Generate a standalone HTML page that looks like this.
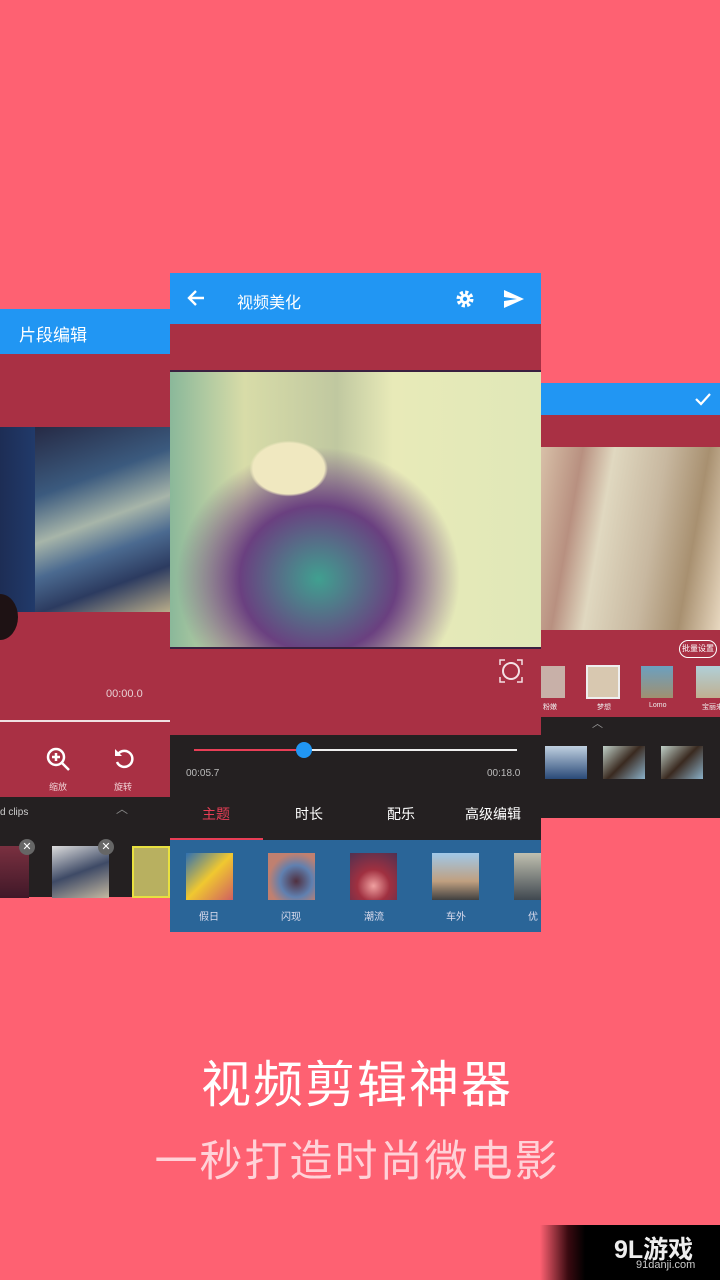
<!DOCTYPE html>
<html><head><meta charset="utf-8"><style>
*{margin:0;padding:0;box-sizing:border-box}
body{width:720px;height:1280px;background:#fe6172;position:relative;overflow:hidden;font-family:"Liberation Sans","Noto Sans CJK SC",sans-serif}
.a{position:absolute}
.blue{background:#2196f3}
.mar{background:#a93044}
.dk{background:#242021}
.w{color:#fff}
</style></head><body>
<!-- left panel -->
<div class="a blue" style="left:0;top:309px;width:170px;height:45px"></div>
<div class="a w" style="left:19px;top:321px;font-size:17px">片段编辑</div>
<div class="a mar" style="left:0;top:354px;width:170px;height:443px"></div>
<div class="a" style="left:0;top:427px;width:35px;height:185px;background:linear-gradient(90deg,#1d2d55,#213a6a)"></div>
<div class="a" style="left:35px;top:427px;width:135px;height:185px;background:linear-gradient(160deg,#262a45 0%,#3b5a7e 30%,#a7b5a9 50%,#4b6a90 65%,#2c3b60 80%,#b9ad8a 100%)"></div>
<div class="a" style="left:-18px;top:594px;width:36px;height:46px;border-radius:50%;background:#1e1214"></div>
<div class="a" style="left:106px;top:688px;font-size:11px;color:#e8d0d4">00:00.0</div>
<div class="a" style="left:0;top:720px;width:170px;height:2px;background:#f0e0e2"></div>
<svg class="a" style="left:45px;top:746px" width="28" height="28" viewBox="0 0 28 28"><circle cx="11" cy="11" r="8" fill="none" stroke="#fff" stroke-width="2.5"/><path d="M11 7v8M7 11h8M17 17l7 7" stroke="#fff" stroke-width="2.5"/></svg>
<svg class="a" style="left:112px;top:746px" width="24" height="26" viewBox="0 0 24 26"><path d="M6 8a8 8 0 1 1-1 8" fill="none" stroke="#fff" stroke-width="2.5"/><path d="M3 3v7h7z" fill="#fff"/></svg>
<div class="a" style="left:49px;top:780px;font-size:9px;color:#f0d0d4">缩放</div>
<div class="a" style="left:114px;top:780px;font-size:9px;color:#f0d0d4">旋转</div>
<div class="a dk" style="left:0;top:797px;width:170px;height:100px"></div>
<div class="a" style="left:0;top:807px;font-size:10px;color:#ccc">d clips</div>
<div class="a" style="left:116px;top:800px;font-size:12px;color:#888">︿</div>
<div class="a" style="left:0;top:846px;width:29px;height:52px;background:linear-gradient(#7a3040,#401828)"></div>
<div class="a" style="left:52px;top:846px;width:57px;height:52px;background:linear-gradient(160deg,#ddd,#3e4a66 50%,#c4b8a0)"></div>
<div class="a" style="left:132px;top:846px;width:38px;height:52px;background:#b8b060;border:2px solid #e8e040"></div>
<div class="a" style="left:19px;top:839px;width:16px;height:16px;border-radius:50%;background:#666;color:#fff;font-size:11px;text-align:center;line-height:16px">✕</div>
<div class="a" style="left:98px;top:839px;width:16px;height:16px;border-radius:50%;background:#666;color:#fff;font-size:11px;text-align:center;line-height:16px">✕</div>
<!-- right panel -->
<div class="a blue" style="left:541px;top:383px;width:179px;height:32px"></div>
<svg class="a" style="left:694px;top:391px" width="18" height="16"><path d="M2 8l5 5 9-10" fill="none" stroke="#fff" stroke-width="2.2"/></svg>
<div class="a mar" style="left:541px;top:415px;width:179px;height:302px"></div>
<div class="a" style="left:541px;top:447px;width:179px;height:183px;background:linear-gradient(100deg,#d8c0a8 0%,#b89080 20%,#e0d8c0 35%,#c8b8a0 60%,#a89070 80%,#e8d8c0)"></div>
<div class="a" style="left:679px;top:640px;width:38px;height:18px;border:1px solid #fff;border-radius:9px;color:#fff;font-size:8px;text-align:center;line-height:16px">批量设置</div>
<div class="a" style="left:541px;top:666px;width:24px;height:32px;background:#c8b0a8"></div>
<div class="a" style="left:586px;top:665px;width:34px;height:34px;background:#d8c8b0;border:2px solid #eee"></div>
<div class="a" style="left:641px;top:666px;width:32px;height:32px;background:linear-gradient(#6ba0c0,#a09070)"></div>
<div class="a" style="left:696px;top:666px;width:24px;height:32px;background:linear-gradient(#b0d0d8,#c0b090)"></div>
<div class="a" style="left:543px;top:702px;font-size:7px;color:#eee">粉嫩</div>
<div class="a" style="left:597px;top:702px;font-size:7px;color:#eee">梦想</div>
<div class="a" style="left:649px;top:702px;font-size:7px;color:#eee">Lomo</div>
<div class="a" style="left:702px;top:702px;font-size:7px;color:#eee;white-space:nowrap">宝丽来</div>
<div class="a dk" style="left:541px;top:717px;width:179px;height:101px"></div>
<div class="a" style="left:592px;top:715px;font-size:11px;color:#999">︿</div>
<div class="a" style="left:545px;top:746px;width:42px;height:33px;background:linear-gradient(#c0d0e0,#2a4a78)"></div>
<div class="a" style="left:603px;top:746px;width:42px;height:33px;background:linear-gradient(135deg,#c0d0c8,#3a2a20 50%,#8ab0c8)"></div>
<div class="a" style="left:661px;top:746px;width:42px;height:33px;background:linear-gradient(135deg,#c0d0c8,#3a2a20 50%,#8ab0c8)"></div>
<!-- center panel -->
<div class="a blue" style="left:170px;top:273px;width:371px;height:51px"></div>
<svg class="a" style="left:186px;top:288px" width="20" height="20"><path d="M18 10H3M10 3l-7 7 7 7" fill="none" stroke="#fff" stroke-width="2.4"/></svg>
<div class="a w" style="left:237px;top:289px;font-size:16px">视频美化</div>
<svg class="a" style="left:455px;top:289px" width="20" height="20" viewBox="0 0 20 20"><circle cx="10" cy="10" r="6.5" fill="none" stroke="#fff" stroke-width="4" stroke-dasharray="3 2.1"/><circle cx="10" cy="10" r="5" fill="#fff"/><circle cx="10" cy="10" r="2.2" fill="#2196f3"/></svg>
<svg class="a" style="left:503px;top:289px" width="22" height="20"><path d="M1 1l20 9-20 9 0-7 13-2-13-2z" fill="#fff"/></svg>
<div class="a mar" style="left:170px;top:324px;width:371px;height:411px"></div>
<div class="a" style="left:170px;top:370px;width:371px;height:2px;background:#3a2040"></div>
<div class="a" style="left:170px;top:372px;width:371px;height:276px;background:radial-gradient(ellipse at 32% 35%,#f0e8c0 0 10%,transparent 11%),radial-gradient(ellipse at 40% 75%,#40a090 0,#6a4080 25%,transparent 45%),linear-gradient(90deg,#8ab89a 0%,#d8dca8 20%,#c0c8a0 45%,#e8eab8 60%,#e0e8b8 100%)"></div>
<div class="a" style="left:170px;top:647px;width:371px;height:2px;background:#3a2040"></div>
<svg class="a" style="left:499px;top:659px" width="24" height="24"><circle cx="12" cy="12" r="8" fill="none" stroke="#f4e0e4" stroke-width="2"/><path d="M1 6V1h5M18 1h5v5M23 18v5h-5M6 23H1v-5" fill="none" stroke="#f4e0e4" stroke-width="1.5"/></svg>
<div class="a dk" style="left:170px;top:735px;width:371px;height:105px"></div>
<div class="a" style="left:194px;top:749px;width:110px;height:2px;background:#e83e56"></div>
<div class="a" style="left:304px;top:749px;width:213px;height:2px;background:#eee"></div>
<div class="a" style="left:296px;top:742px;width:16px;height:16px;border-radius:50%;background:#2196f3"></div>
<div class="a" style="left:186px;top:768px;font-size:10px;color:#bbb">00:05.7</div>
<div class="a" style="left:487px;top:768px;font-size:10px;color:#bbb">00:18.0</div>
<div class="a" style="left:202px;top:804px;font-size:14px;color:#e83e56">主题</div>
<div class="a w" style="left:295px;top:804px;font-size:14px">时长</div>
<div class="a w" style="left:387px;top:804px;font-size:14px">配乐</div>
<div class="a w" style="left:465px;top:804px;font-size:14px">高级编辑</div>
<div class="a" style="left:170px;top:838px;width:93px;height:2px;background:#e83e56"></div>
<div class="a" style="left:170px;top:840px;width:371px;height:92px;background:#2a6598"></div>
<div class="a" style="left:186px;top:853px;width:47px;height:47px;background:linear-gradient(135deg,#3070b0,#f0c830 50%,#d06060)"></div>
<div class="a" style="left:268px;top:853px;width:47px;height:47px;background:radial-gradient(circle at 60% 60%,#503040,#6080b0 40%,#c08070 70%)"></div>
<div class="a" style="left:350px;top:853px;width:47px;height:47px;background:radial-gradient(circle at 50% 70%,#f0a0a0,#a03040 40%,#503050)"></div>
<div class="a" style="left:432px;top:853px;width:47px;height:47px;background:linear-gradient(#a0c8e8,#c0a080 60%,#404040)"></div>
<div class="a" style="left:514px;top:853px;width:27px;height:47px;background:linear-gradient(#c0c0b0,#404850)"></div>
<div class="a" style="left:199px;top:908px;font-size:10px;color:#dde">假日</div>
<div class="a" style="left:281px;top:908px;font-size:10px;color:#dde">闪现</div>
<div class="a" style="left:364px;top:908px;font-size:10px;color:#dde">潮流</div>
<div class="a" style="left:446px;top:908px;font-size:10px;color:#dde">车外</div>
<div class="a" style="left:528px;top:908px;font-size:10px;color:#dde">优</div>
<!-- slogan -->
<div class="a w" style="left:0;width:714px;top:1045px;text-align:center;font-size:50px;letter-spacing:2px">视频剪辑神器</div>
<div class="a" style="left:0;width:714px;top:1127px;text-align:center;font-size:43px;color:#ffd2d8;letter-spacing:2px">一秒打造时尚微电影</div>
<!-- logo -->
<div class="a" style="left:540px;top:1225px;width:180px;height:55px;background:linear-gradient(90deg,#fe6172 0,#3a0a10 28px,#000 45px)"></div>
<div class="a" style="left:614px;top:1230px;font-size:25px;font-weight:bold;color:#eee">9L游戏</div>
<div class="a" style="left:636px;top:1259px;font-size:11px;color:#ccc">91danji.com</div>
</body></html>
